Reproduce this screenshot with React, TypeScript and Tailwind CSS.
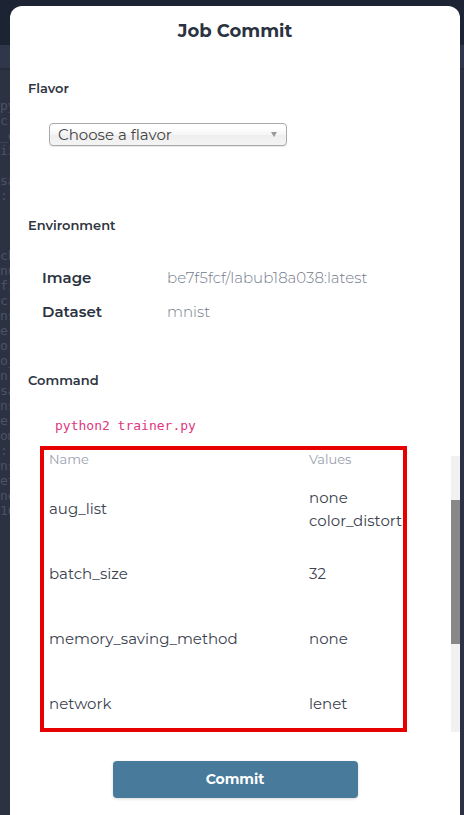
import { useState } from 'react';

const bgLines = ['py', 'c:', '_d', 'iz', 'sa', ':', 'ch', 'nu', 'fi', 'c:', 'ns', 'e', 'or', 'o_', 'n', 'sa', 'ns', 'e', 'om', ':', 'ns', 'et', 'ne', '16'];

const params = [
  { name: 'aug_list', values: ['none', 'color_distort'] },
  { name: 'batch_size', values: ['32'] },
  { name: 'memory_saving_method', values: ['none'] },
  { name: 'network', values: ['lenet'] },
];

const font = 'font-["Montserrat","Inter","Noto_Sans",sans-serif]';

export default function App() {
  const [flavor, setFlavor] = useState('');

  return (
    <div className="relative h-[815px] w-[464px] overflow-hidden bg-[#2c3242]">
      {/* page behind the modal */}
      <div className="h-[45px] bg-[#1c2333]" />
      <div className="h-[23px] bg-[#30374a]" />
      <div className="h-[2px] bg-[#262c3b]" />
      <div className="mt-[28px] flex w-[10px] flex-col overflow-hidden font-['DejaVu_Sans_Mono',monospace] text-[13px] leading-[15px] text-[#4b5265]">
        {bgLines.map((l, i) => (
          <div key={i} className={i === 5 ? 'mb-[45px]' : i === 4 ? 'mt-[15px]' : ''}>{l}</div>
        ))}
      </div>

      {/* modal */}
      <div className={`absolute left-[10px] right-[4px] top-[6px] bottom-0 flex flex-col rounded-t-[12px] bg-white ${font}`}>
        <h1 className="pt-[13px] text-center text-[18px] font-bold leading-[24px] text-[#2b3241]">Job Commit</h1>

        <div className="pl-[18px]">
          <h2 className="mt-[37px] text-[13px] font-semibold leading-[16px] text-[#2f3542]">Flavor</h2>

          <div className="ml-[21px] mt-[27px] flex h-[23px] w-[238px] items-center justify-between rounded-[4px] border border-[#aaaaaa] bg-[linear-gradient(#ffffff_20%,#f6f6f6_50%,#eeeeee_52%,#f4f4f4_100%)] pl-[8px] pr-[9px] shadow-[0_1px_1px_rgba(0,0,0,0.1)]">
            <span className="text-[15px] leading-[18px] text-[#444444]">{flavor || 'Choose a flavor'}</span>
            <span onClick={() => setFlavor('')} className="h-0 w-0 border-x-[3px] border-t-[5px] border-x-transparent border-t-[#999999]" />
          </div>

          <h2 className="mt-[71px] text-[13px] font-semibold leading-[16px] text-[#2f3542]">Environment</h2>

          <div className="ml-[14px] mt-[36px] flex flex-col gap-[16px] text-[15px] leading-[18px]">
            <div className="flex">
              <span className="w-[125px] font-semibold text-[#2b3241]">Image</span>
              <span className="font-light text-[#737b8a]">be7f5fcf/labub18a038:latest</span>
            </div>
            <div className="flex">
              <span className="w-[125px] font-semibold text-[#2b3241]">Dataset</span>
              <span className="font-light text-[#737b8a]">mnist</span>
            </div>
          </div>

          <h2 className="mt-[51px] text-[13px] font-semibold leading-[16px] text-[#2f3542]">Command</h2>

          <code className="ml-[27px] mt-[30px] block font-['DejaVu_Sans_Mono',monospace] text-[13px] leading-[16px] text-[#e0367f]">python2 trainer.py</code>
        </div>

        {/* parameters */}
        <div className="mt-[12px] flex h-[286px]">
          <div className="ml-[30px] h-[286px] w-[367px] overflow-hidden border-4 border-[#e60000] pl-[5px]">
            <div className="-mt-[9px]">
              <div className="flex h-[35px] items-center text-[13px] leading-[16px] text-[#9aa1ad]">
                <span className="w-[260px]">Name</span>
                <span>Values</span>
              </div>
              {params.map((p) => (
                <div key={p.name} className="flex h-[65px] items-center text-[15px] leading-[23px] text-[#3b424f]">
                  <span className="w-[260px]">{p.name}</span>
                  <div className="flex flex-col">
                    {p.values.map((v) => (
                      <span key={v}>{v}</span>
                    ))}
                  </div>
                </div>
              ))}
            </div>
          </div>
          <div className="ml-auto mt-[10px] flex h-[276px] w-[9px] flex-col bg-[#f1f1f1]">
            <div className="mt-[44px] h-[144px] bg-[#888888]" />
          </div>
        </div>

        <div className="mt-[29px] flex justify-center">
          <button className="h-[37px] w-[245px] rounded-[4px] bg-[#477a9b] text-[14px] font-bold text-white shadow-[0_1px_3px_rgba(0,0,0,0.15)]">
            Commit
          </button>
        </div>
      </div>
    </div>
  );
}
